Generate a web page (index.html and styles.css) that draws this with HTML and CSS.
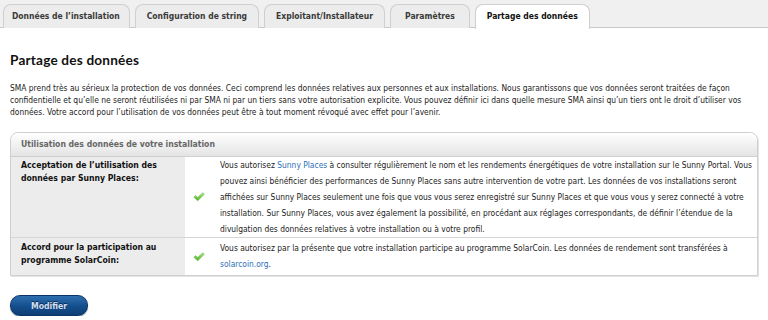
FILE: index.html
```html
<!DOCTYPE html>
<html lang="fr">
<head>
<meta charset="utf-8">
<title>Partage des données</title>
<link rel="stylesheet" href="styles.css">
</head>
<body>
<ul class="tabs">
	<li class="tab first">Données de l’installation</li>
	<li class="tab">Configuration de string</li>
	<li class="tab">Exploitant/Installateur</li>
	<li class="tab wide">Paramètres</li>
	<li class="tab active">Partage des données</li>
</ul>

<div class="page">
	<h1>Partage des données</h1>

	<p class="intro">SMA prend très au sérieux la protection de vos données. Ceci comprend les données relatives aux personnes et aux installations. Nous garantissons que vos données seront traitées de façon<br>
	confidentielle et qu’elle ne seront réutilisées ni par SMA ni par un tiers sans votre autorisation explicite. Vous pouvez définir ici dans quelle mesure SMA ainsi qu’un tiers ont le droit d’utiliser vos<br>
	données. Votre accord pour l’utilisation de vos données peut être à tout moment révoqué avec effet pour l’avenir.</p>

	<div class="panel">
		<div class="panel-head">Utilisation des données de votre installation</div>
		<div class="row">
			<div class="label">Acceptation de l’utilisation des données par Sunny Places:</div>
			<div class="state"><svg class="check" viewBox="0 0 14 12" width="12" height="10"><defs><linearGradient id="g1" x1="0" y1="0" x2="0" y2="1"><stop offset="0" stop-color="#b4ee86"/><stop offset="1" stop-color="#45b021"/></linearGradient></defs><path d="M0.8 6.2 L3 4.2 L5.4 6.6 L11.4 0.8 L13.4 2.8 L5.4 10.6 Z" fill="url(#g1)" stroke="#5fb03a" stroke-width="0.6"/></svg></div>
			<div class="text">Vous autorisez <a href="#">Sunny Places</a> à consulter régulièrement le nom et les rendements énergétiques de votre installation sur le Sunny Portal. Vous<br>
			pouvez ainsi bénéficier des performances de Sunny Places sans autre intervention de votre part. Les données de vos installations seront<br>
			affichées sur Sunny Places seulement une fois que vous vous serez enregistré sur Sunny Places et que vous vous y serez connecté à votre<br>
			installation. Sur Sunny Places, vous avez également la possibilité, en procédant aux réglages correspondants, de définir l’étendue de la<br>
			divulgation des données relatives à votre installation ou à votre profil.</div>
		</div>
		<div class="row">
			<div class="label">Accord pour la participation au programme SolarCoin:</div>
			<div class="state"><svg class="check" viewBox="0 0 14 12" width="12" height="10"><defs><linearGradient id="g2" x1="0" y1="0" x2="0" y2="1"><stop offset="0" stop-color="#b4ee86"/><stop offset="1" stop-color="#45b021"/></linearGradient></defs><path d="M0.8 6.2 L3 4.2 L5.4 6.6 L11.4 0.8 L13.4 2.8 L5.4 10.6 Z" fill="url(#g2)" stroke="#5fb03a" stroke-width="0.6"/></svg></div>
			<div class="text">Vous autorisez par la présente que votre installation participe au programme SolarCoin. Les données de rendement sont transférées à<br>
			<a href="#">solarcoin.org</a>.</div>
		</div>
	</div>

	<button class="btn">Modifier</button>
</div>
</body>
</html>
```

FILE: styles.css
```css
body { margin: 0; font-family: "DejaVu Sans Condensed", "DejaVu Sans", sans-serif; font-size: 8.4px; color: #222; background: #fff; }
a { color: #2c6fba; text-decoration: none; }

.tabs { list-style: none; margin: 0; padding: 4px 0 0 3px; display: flex; gap: 5px;
	background: #f0f0f0; border-bottom: 1px solid #c9c9c9; height: 23px; }
.tab { height: 23px; line-height: 23px; padding: 0 11px; margin-bottom: -1px;
	border: 1px solid #cfcfcf; border-bottom: none; border-radius: 8px 8px 0 0;
	background: #ececec; color: #3a3a3a; font-weight: bold; font-size: 8.5px; }
.tab.first { padding: 0 9px 0 8px; }
.tab.wide { padding: 0 14px; }
.tab.active { background: #fff; color: #111; height: 24px; }

.page { padding: 0 10px; }
h1 { font-family: Lato, "DejaVu Sans", sans-serif; font-size: 13.6px; font-weight: bold; color: #111;
	line-height: 16px; margin: 24px 0 14px; letter-spacing: 0.2px; }
.intro { margin: 0 0 14px; line-height: 12px; white-space: nowrap; }

.panel { border: 1px solid #cfcfcf; border-radius: 8px 8px 0 0; box-shadow: 1px 1px 0 #e4e4e4; }
.panel-head { height: 23px; line-height: 23px; padding: 0 10px; font-weight: bold; color: #666;
	font-size: 8.6px; background: linear-gradient(#ffffff, #e4e4e4); border-bottom: 1px solid #cfcfcf;
	border-radius: 8px 8px 0 0; }
.row { display: flex; border-bottom: 1px solid #d6d6d6; }
.row:last-child { border-bottom: none; }
.label { width: 154px; flex: none; background: #ececec; padding: 2px 10px 3px 10px;
	font-weight: bold; font-size: 8.6px; line-height: 13px; color: #111; }
.row:last-child .label { padding-top: 3px; }
.state { width: 28px; flex: none; display: flex; align-items: center; justify-content: center; }
.text { padding: 0 0 0 7px; line-height: 16px; white-space: nowrap; }
.row:last-child .text { padding: 2px 0 3px 7px; }
.check { display: block; }

.btn { display: block; margin-top: 19px; width: 78px; height: 21px; border: 1px solid #0b3466; border-radius: 10px;
	background: linear-gradient(#2e6fb0, #144e8c 55%, #0e3f75); color: #d4deec;
	font-family: "DejaVu Sans Condensed", sans-serif; font-size: 8.6px; font-weight: bold;
	text-shadow: 0 -1px 0 #0a2d57; box-shadow: 0 1px 1px #9aa; }
```
